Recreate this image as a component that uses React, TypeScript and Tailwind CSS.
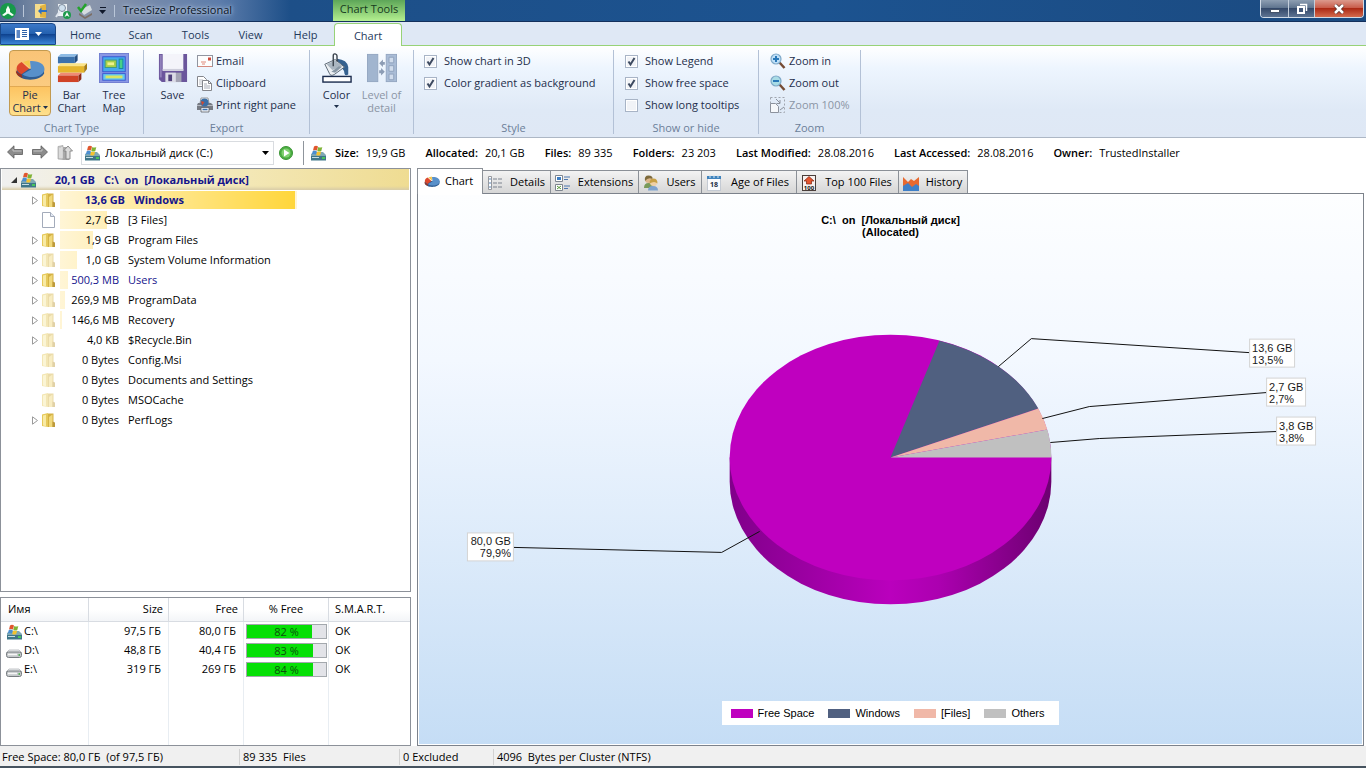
import { ReactNode } from "react";

interface IconProps {
  className?: string;
}

interface TreeItem {
  name: string;
  size: string;
  share: number;
  kind?: "folder" | "faded" | "file";
  expandable?: boolean;
  tone?: "bold" | "blue";
}

interface Drive {
  name: string;
  size: string;
  free: string;
  percent: number;
  system?: boolean;
}

const treeItems: TreeItem[] = [
  { name: "Windows", size: "13,6 GB", share: 67.6, expandable: true, tone: "bold" },
  { name: "[3 Files]", size: "2,7 GB", share: 13.5, kind: "file" },
  { name: "Program Files", size: "1,9 GB", share: 9.5, expandable: true },
  { name: "System Volume Information", size: "1,0 GB", share: 4.9, kind: "faded", expandable: true },
  { name: "Users", size: "500,3 MB", share: 2.4, expandable: true, tone: "blue" },
  { name: "ProgramData", size: "269,9 MB", share: 1.3, kind: "faded", expandable: true },
  { name: "Recovery", size: "146,6 MB", share: 0.7, kind: "faded", expandable: true },
  { name: "$Recycle.Bin", size: "4,0 KB", share: 0, kind: "faded", expandable: true },
  { name: "Config.Msi", size: "0 Bytes", share: 0, kind: "faded" },
  { name: "Documents and Settings", size: "0 Bytes", share: 0, kind: "faded" },
  { name: "MSOCache", size: "0 Bytes", share: 0, kind: "faded" },
  { name: "PerfLogs", size: "0 Bytes", share: 0, expandable: true },
];

const drives: Drive[] = [
  { name: "C:\\", size: "97,5 ГБ", free: "80,0 ГБ", percent: 82, system: true },
  { name: "D:\\", size: "48,8 ГБ", free: "40,4 ГБ", percent: 83 },
  { name: "E:\\", size: "319 ГБ", free: "269 ГБ", percent: 84 },
];

const facts = [
  ["Size:", "19,9 GB"],
  ["Allocated:", "20,1 GB"],
  ["Files:", "89 335"],
  ["Folders:", "23 203"],
  ["Last Modified:", "28.08.2016"],
  ["Last Accessed:", "28.08.2016"],
  ["Owner:", "TrustedInstaller"],
];

const legend = [
  { label: "Free Space", color: "bg-[#bf00bf]" },
  { label: "Windows", color: "bg-[#506080]" },
  { label: "[Files]", color: "bg-[#f0b8a8]" },
  { label: "Others", color: "bg-[#c0c0c0]" },
];

/* ---------- icons ---------- */

function SystemDriveIcon({ className = "h-4 w-4" }: IconProps) {
  return (
    <svg viewBox="0 0 16 16" className={className} aria-hidden="true">
      <path d="M1 9l3-2h9l3 3v5H1z" fill="#7fa8b4" />
      <path d="M1 11h15v4.500H1z" fill="#3f7688" />
      <path d="M2 12.500h7" stroke="#c5dde4" />
      <path d="M12 13h3" stroke="#4be04b" strokeWidth="1.500" />
      <path d="M4 1.500q2-1.500 4 0l-1 4q-2-1.200-4 0z" fill="#e0562d" />
      <path d="M8.300 2q2 1.200 4 0l-1 4q-2 1-4 0z" fill="#7fb436" />
      <path d="M2.800 6q2-1.200 4 0l-1 3.500q-2-1-4 0z" fill="#4a8ed0" />
      <path d="M7.200 6.500q2 1 4 0l-1 3.600q-2 1-4 0z" fill="#f4c22f" />
    </svg>
  );
}

function DriveIcon() {
  return (
    <svg viewBox="0 0 16 16" className="h-4 w-4" aria-hidden="true">
      <path d="M3 7h10l3 3H0z" fill="#eceeef" stroke="#a9aeb2" strokeWidth=".7" />
      <rect x=".5" y="9" width="15" height="5.500" rx="2" fill="#c4c8ca" stroke="#777c80" />
      <path d="M2 11.500h9" stroke="#f6f6f6" strokeWidth="1.500" />
      <path d="M12.500 12h1.500" stroke="#38a838" strokeWidth="1.500" />
    </svg>
  );
}

function FolderIcon({ faded }: { faded?: boolean }) {
  return (
    <svg viewBox="0 0 16 16" className={faded ? "h-4 w-4 opacity-45" : "h-4 w-4"} aria-hidden="true">
      <path d="M1 2.500L7 1v14l-6-1z" fill="#e6c95a" />
      <path d="M2 3.500l3-.8v11.500l-3-.6z" fill="#f8eaa4" />
      <path d="M7 1.500h5.500V15H7z" fill="#d4b143" />
      <path d="M8 5l3.500-2.500V15H8z" fill="#f0d97c" />
      <path d="M11.500 9.500l2.500 1V15h-2.500z" fill="#bd9a3c" />
    </svg>
  );
}

function FileIcon() {
  return (
    <svg viewBox="0 0 16 16" className="h-4 w-4" aria-hidden="true">
      <path d="M1.500.5h8l4 4v11h-12z" fill="#fff" stroke="#a3abba" />
      <path d="M9.500.5v4h4" fill="#e3e9f3" stroke="#a3abba" />
    </svg>
  );
}

function PieIcon({ className = "h-8 w-8" }: IconProps) {
  return (
    <svg viewBox="0 0 32 32" className={className} aria-hidden="true">
      <path d="M2 14v5c2 9 26 9 29 0v-5z" fill="#2f5c92" />
      <path d="M17 15L16 6c20-1 20 16 3 17-5 0-9-1-11-3z" fill="#5890ca" />
      <path d="M15 14L7 7C-1 11 1 18 7 20z" fill="#dc482c" />
      <path d="M7 20c-4-1-6-3-6-6v4c1 3 3 4 7 6z" fill="#99301e" />
      <path d="M16 13L8.500 7C11 6 13 5.500 15.500 5z" fill="#f3c54a" />
    </svg>
  );
}

function BarsIcon() {
  return (
    <svg viewBox="0 0 32 32" className="h-[30px] w-[30px]" aria-hidden="true">
      <path d="M1 4l3-3h18l-3 3z" fill="#8dbbe4" />
      <path d="M1 4h18v7H1z" fill="#3c72ac" />
      <path d="M19 4l3-3v7l-3 3z" fill="#264f80" />
      <path d="M1 14l3-3h28l-3 3z" fill="#fbe488" />
      <path d="M1 14h28v7H1z" fill="#e5b62c" />
      <path d="M29 14l3-3v6l-3 4z" fill="#a47c16" />
      <path d="M1 24l3-3h22l-3 3z" fill="#f08a74" />
      <path d="M1 24h22v7H1z" fill="#d04327" />
      <path d="M23 24l3-3v7l-3 3z" fill="#8f2a16" />
    </svg>
  );
}

function TreeMapIcon() {
  return (
    <svg viewBox="0 0 32 32" className="h-[30px] w-[30px]" aria-hidden="true">
      <rect x=".5" y=".5" width="31" height="31" fill="#8a97e4" stroke="#6f7cd0" />
      <rect x="4" y="4" width="24" height="16" fill="#45a9ec" stroke="#3a55d0" />
      <rect x="6.500" y="7.500" width="12" height="8" fill="#a8cf48" stroke="#3a9a80" />
      <rect x="9" y="10" width="7" height="3" fill="#eef28a" />
      <rect x="21.500" y="6.500" width="4" height="10" fill="#47d087" stroke="#1585a0" />
      <rect x="4" y="22" width="24" height="7" fill="#64c8ef" stroke="#3a55d0" />
      <rect x="7" y="24" width="18" height="3" fill="#d8e564" />
    </svg>
  );
}

function SaveIcon() {
  return (
    <svg viewBox="0 0 32 32" className="h-[30px] w-[30px]" aria-hidden="true">
      <path d="M1 1h30v30H4l-3-3z" fill="#6b569c" />
      <path d="M2 2h2v24H2z" fill="#9080ba" />
      <rect x="5" y="1" width="22" height="18" fill="#f4f4fa" />
      <path d="M5 17h22v2H5z" fill="#cfcfdc" />
      <rect x="8" y="21" width="17" height="10" fill="#a4a4b4" />
      <rect x="8" y="21" width="11" height="10" fill="#dcdce6" />
      <rect x="11" y="23" width="4" height="7" fill="#50427c" />
    </svg>
  );
}

function MailIcon() {
  return (
    <svg viewBox="0 0 16 16" className="h-4 w-4" aria-hidden="true">
      <rect x=".5" y="2.500" width="15" height="11" fill="#fdfdfd" stroke="#9095a0" />
      <path d="M11 4.500h3v3h-3z" fill="#cf4a3c" />
      <path d="M4 9h5M5 11h3" stroke="#e08878" />
      <path d="M1 13.500h14" stroke="#d58a7e" />
    </svg>
  );
}

function CopyIcon() {
  return (
    <svg viewBox="0 0 16 16" className="h-4 w-4" aria-hidden="true">
      <path d="M.5 1.500h6l3 3v7h-9z" fill="#fff" stroke="#84868c" />
      <path d="M2 5h4M2 7h4M2 9h3" stroke="#b9bcc4" />
      <path d="M5.500 5.500h6l3 3v7h-9z" fill="#fff" stroke="#84868c" />
      <path d="M11.500 5.500v3h3" fill="none" stroke="#84868c" />
      <path d="M7 9h3M7 11h6M7 13h6" stroke="#a7abb6" />
    </svg>
  );
}

function PrinterIcon() {
  return (
    <svg viewBox="0 0 16 16" className="h-4 w-4" aria-hidden="true">
      <path d="M4 1h7l1 5H3z" fill="#fff" stroke="#777" strokeWidth=".7" />
      <path d="M1 6h13l2 2v5H0V8z" fill="#767a83" />
      <path d="M0 8h16v1H0z" fill="#b4b8c0" />
      <circle cx="7.500" cy="5.500" r="4" fill="#3a6ea6" />
      <path d="M4 4l3.500 1L5 8.500z" fill="#d04a30" />
      <path d="M4 10.500h8V15H4z" fill="#f5f5f7" stroke="#5c6068" strokeWidth=".8" />
      <path d="M5.500 12.500h5" stroke="#3a72b0" strokeWidth="1.500" />
    </svg>
  );
}

function BucketIcon() {
  return (
    <svg viewBox="0 0 32 32" className="h-[30px] w-8" aria-hidden="true">
      <path d="M16 6q11 1 12 9v8q-3 2-4-1 0-6-8-7z" fill="#35618f" />
      <path d="M3 12L14 7l10 8-11 8q-4 2-5-1z" fill="#eceff2" stroke="#596572" />
      <path d="M5 12l9-4 8 6-11 4z" fill="#aab6c1" />
      <path d="M12 14V3q0-2.500 2-2t2 2v6" fill="none" stroke="#3c444e" strokeWidth="1.500" />
      <path d="M10 20l8-6 3 1-7 6z" fill="#8797a5" />
      <rect x="1" y="25" width="30" height="6" fill="#fff" stroke="#1b2c4d" strokeWidth="1.500" />
    </svg>
  );
}

function DetailLevelIcon() {
  return (
    <svg viewBox="0 0 32 32" className="h-[30px] w-8" aria-hidden="true">
      <rect x=".5" y="1.500" width="11" height="29" fill="#a1b5cf" stroke="#93a6c1" />
      <rect x="20.500" y="1.500" width="11" height="29" fill="#a9bcd6" stroke="#93a6c1" />
      <path d="M23.500 4.500h5v6h-5zM23.500 13.500h5v6h-5zM23.500 22.500h5v6h-5z" fill="#d0dcec" stroke="#8fa2bd" />
      <path d="M13 11l4-4v2.500h2v3h-2V15z" fill="#8d9db5" />
      <path d="M19 20l-4-4v2.500h-2v3h2V24z" fill="#8d9db5" />
    </svg>
  );
}

function MagnifierIcon({ plus }: { plus?: boolean }) {
  return (
    <svg viewBox="0 0 16 16" className="h-4 w-4" aria-hidden="true">
      <path d="M9.500 9.500l5 5.500" stroke="#754b34" strokeWidth="2.500" />
      <circle cx="6" cy="6" r="5" fill={plus ? "#bfe0f8" : "#a9dce6"} stroke="#7fa9c8" strokeWidth="1.200" />
      <path d={plus ? "M3 6h6M6 3v6" : "M3 6h6"} stroke="#2a78b8" strokeWidth="2" />
    </svg>
  );
}

function ZoomFullIcon() {
  return (
    <svg viewBox="0 0 16 16" className="h-4 w-4" aria-hidden="true">
      <path d="M.5.5h14v15H.5z" fill="none" stroke="#a0a5ae" strokeDasharray="2 2" />
      <path d="M.5 6.500h5l3 3v6h-8z" fill="#f6f8fb" stroke="#8c929d" />
      <path d="M6 2l4 4M10 3v3.500H6.500M10 13l4-3" fill="none" stroke="#8c929d" />
    </svg>
  );
}

function ArrowIcon({ right }: { right?: boolean }) {
  return (
    <svg viewBox="0 0 16 16" className="h-4 w-4" aria-hidden="true">
      <path
        d={right ? "M15.500 7L9 .8v3.700H.5v5H9v3.700z" : "M.5 7L7 .8v3.700h8.500v5H7v3.700z"}
        fill="#8c8c8c"
        stroke="#5c5c5c"
        strokeWidth=".8"
      />
      <path d={right ? "M1.500 6H10V4" : "M14.500 6H6V4"} fill="none" stroke="#c4c4c4" />
    </svg>
  );
}

function FolderUpIcon() {
  return (
    <svg viewBox="0 0 16 16" className="h-4 w-4" aria-hidden="true">
      <path d="M1 1.500L6 .5v14l-5-.5z" fill="#c9c9c9" stroke="#999" strokeWidth=".6" />
      <path d="M6 2h6v13H6z" fill="#a8a8a8" />
      <path d="M3 3v10M5 2v11" stroke="#ececec" />
      <path d="M11 1l4.500 5H13v8H9V6H6.500z" fill="#dcdcdc" stroke="#858585" strokeWidth=".9" />
    </svg>
  );
}

function DetailsTabIcon() {
  return (
    <svg viewBox="0 0 16 16" className="h-4 w-4" aria-hidden="true">
      <path d="M1.500 1.500h3v13h-3z" fill="#fff" stroke="#96999f" />
      <path d="M2 4h2M2 8h2M2 12h2" stroke="#5d85b5" />
      <path d="M6 4h4M11 4h4M6 8h4M11 8h4M6 12h4M11 12h4" stroke="#7c838f" />
    </svg>
  );
}

function ExtensionsTabIcon() {
  return (
    <svg viewBox="0 0 16 16" className="h-4 w-4" aria-hidden="true">
      <path d="M.5.5h7v6h-7zM.5 9.500h7v6h-7z" fill="#fff" stroke="#7e858f" />
      <path d="M2 2h4v3H2z" fill="#3b7dc4" />
      <path d="M2 11l4 3M6 11l-4 3" stroke="#569838" />
      <path d="M9 2h6M9 4.500h4M9 11h6M9 13.500h4" stroke="#4d77ae" />
    </svg>
  );
}

function UsersTabIcon() {
  return (
    <svg viewBox="0 0 16 16" className="h-4 w-4" aria-hidden="true">
      <path d="M1 13q0-5 4.500-5t4.500 5z" fill="#7a9a5a" />
      <circle cx="5.500" cy="4.500" r="3.500" fill="#dcb68c" />
      <path d="M2 6Q1 .5 5.500.5T9.500 4Q5 2 2 6z" fill="#7d6a3c" />
      <path d="M5 15.500q0-4.500 5-4.500t5 4.500z" fill="#7ea3cf" />
      <circle cx="10.500" cy="7.500" r="3.500" fill="#efd0a6" />
      <path d="M6.500 8.500Q6.500 3.500 10.500 3.500T14.500 8.500q-3-3-8 0z" fill="#c7a045" />
    </svg>
  );
}

function CalendarTabIcon() {
  return (
    <svg viewBox="0 0 16 16" className="h-4 w-4" aria-hidden="true">
      <rect x="1.500" y="2.500" width="13" height="13" fill="#fbfbfd" stroke="#c4cad3" />
      <rect x="1" y="1" width="14" height="3" fill="#3f83bd" />
      <path d="M4 0v3M8 0v3M12 0v3" stroke="#d7e6f3" />
      <text x="8" y="12" textAnchor="middle" fontSize="7" fontWeight="700" fill="#1b2b45">18</text>
    </svg>
  );
}

function TopTabIcon() {
  return (
    <svg viewBox="0 0 16 16" className="h-4 w-4" aria-hidden="true">
      <rect x="1.500" y=".5" width="13" height="15" fill="#f7f1ef" stroke="#4a3e3a" />
      <path d="M8 1.500l5 4.500h-2.500v3h-5V6H3z" fill="#e4552e" stroke="#7f2411" strokeWidth=".7" />
      <text x="8" y="15" textAnchor="middle" fontSize="6" fontWeight="700" fill="#111">100</text>
    </svg>
  );
}

function HistoryTabIcon() {
  return (
    <svg viewBox="0 0 16 16" className="h-4 w-4" aria-hidden="true">
      <path d="M0 2l5 5 3-3 3 2 5-4v14H0z" fill="#e8692f" />
      <path d="M0 11l5-3 4 4 4-3 3 2v5H0z" fill="#3f80c8" />
    </svg>
  );
}

function Caret({ className }: IconProps) {
  return (
    <svg viewBox="0 0 7 4" className={className} aria-hidden="true">
      <path d="M0 0h7L3.500 4z" fill="currentColor" />
    </svg>
  );
}

/* ---------- title bar and ribbon ---------- */

function TitleBar() {
  return (
    <header className="flex h-[22px] border-b border-[#14305c] bg-[linear-gradient(to_right,#4f6a92_0,#8f9bac_60px,#8794ab_100px,#5c7cab_220px,#1d4f88_290px,#1c5390_60%,#1b4a80)]">
      <div className="flex w-[333px] shrink-0 items-center">
        <svg viewBox="0 0 16 16" className="h-4 w-4" aria-hidden="true">
          <circle cx="8" cy="8" r="8" fill="#16994a" />
          <path d="M8 2.500l2 4v2.500l4 3-2 1-4-2.500L4 13l-2-1 4-3V6.500z" fill="#f2fff5" />
        </svg>
        <span className="mx-[7px] h-3 w-px bg-[#b9c6d8]" />
        <button type="button" aria-label="Exit" className="ml-0.5">
          <svg viewBox="0 0 16 16" className="h-4 w-4">
            <path d="M2 1h10v14H2z" fill="#f6dd8c" />
            <path d="M7 3l6-2v14l-6-1z" fill="#e2b33e" />
            <path d="M14 7H8.500V4.500L5 8l3.500 3.500V9H14z" fill="#2d6fc0" />
          </svg>
        </button>
        <button type="button" aria-label="Search" className="ml-1.5">
          <svg viewBox="0 0 16 16" className="h-4 w-4">
            <path d="M3 1h9v12H3z" fill="#edf2f6" />
            <circle cx="7" cy="5" r="3.500" fill="#cfe0ee" stroke="#7d8b9c" />
            <path d="M5 8l-4 6" stroke="#dfe6ee" strokeWidth="2" />
            <circle cx="12" cy="12" r="4" fill="#1d9a4c" />
            <path d="M12 9l2.500 5-2.500-1.500L9.500 14z" fill="#fff" />
          </svg>
        </button>
        <button type="button" aria-label="Options" className="ml-1.5">
          <svg viewBox="0 0 16 16" className="h-4 w-4">
            <path d="M3 7l10-5 2 5-8 5z" fill="#d5dce0" />
            <path d="M2 10l6 4 7-4v2l-7 4-6-4z" fill="#7c6f66" />
            <path d="M1 4l3 4 5-7" fill="none" stroke="#24a42c" strokeWidth="2.500" />
          </svg>
        </button>
        <button type="button" aria-label="Customize toolbar" className="ml-1.5 flex flex-col items-center gap-0.5 text-[#10182a]">
          <span className="h-px w-1.5 bg-[#10182a]" />
          <Caret className="h-1 w-[7px]" />
        </button>
        <span className="mr-2 ml-2 h-3 w-px bg-[#b9c6d8]" />
        <h1 className="text-[11px] text-[#0a1424] [text-shadow:0_0_6px_#c3d4ea,0_0_3px_#c3d4ea]">TreeSize Professional</h1>
      </div>
      <div className="w-[72px] shrink-0 bg-linear-to-b from-[#5da658] to-[#b4f090] text-center text-[11px] leading-[18px] text-[#16391d]">
        Chart Tools
      </div>
      <div className="mr-0.5 ml-auto flex h-[18px] overflow-hidden rounded-b border border-t-0 border-[#d0dae6]">
        <button type="button" aria-label="Minimize" className="flex w-7 items-center justify-center border-r border-[#c3cedb] bg-[linear-gradient(#8d9eb2,#60758f_45%,#34496a_50%,#5d7392)]">
          <span className="mt-1 h-1 w-2.5 border border-[#44536a] bg-white" />
        </button>
        <button type="button" aria-label="Restore" className="flex w-[26px] items-center justify-center border-r border-[#c3cedb] bg-[linear-gradient(#8d9eb2,#60758f_45%,#34496a_50%,#5d7392)]">
          <svg viewBox="0 0 12 12" className="h-3 w-3">
            <path d="M4 1.500h6.500V8" fill="none" stroke="#fff" strokeWidth="1.500" />
            <rect x="2" y="4" width="6" height="6" fill="#44597a" stroke="#fff" strokeWidth="2" />
          </svg>
        </button>
        <button type="button" aria-label="Close" className="flex w-12 items-center justify-center bg-[linear-gradient(#dc9a8d,#c95d4b_45%,#ac2a15_50%,#d46a4d)]">
          <svg viewBox="0 0 12 10" className="h-2.5 w-3">
            <path d="M2 1l8 8M10 1L2 9" stroke="#5a302c" strokeWidth="4" />
            <path d="M2 1l8 8M10 1L2 9" stroke="#fff" strokeWidth="2.500" />
          </svg>
        </button>
      </div>
    </header>
  );
}

function RibbonTabs() {
  return (
    <nav className="flex h-6 items-end border-b border-[#97d277] bg-[#dfe8f5] text-[11px] text-[#1e395b]">
      <button type="button" aria-label="Application menu" className="flex h-[22px] w-14 items-center justify-center gap-1.5 rounded-tr border border-[#1a4888] bg-[linear-gradient(#3c78c8,#2461b0_48%,#0f4390_52%,#3c86d8)] text-white">
        <svg viewBox="0 0 14 12" className="h-3 w-3.5" aria-hidden="true">
          <rect width="14" height="12" fill="#fff" />
          <path d="M1.500 2h3.500v8H1.500z" fill="#5b86c4" />
          <path d="M7 2.500h5M7 4.500h5M7 6.500h5M7 8.500h5" stroke="#2f62a8" />
        </svg>
        <Caret className="h-1 w-[7px]" />
      </button>
      <div className="flex h-[22px] pl-0.5 [&>button]:pt-0.5">
        <button type="button" className="w-[55px]">Home</button>
        <button type="button" className="w-[55px]">Scan</button>
        <button type="button" className="w-[55px]">Tools</button>
        <button type="button" className="w-[55px]">View</button>
        <button type="button" className="w-[55px]">Help</button>
        <button type="button" className="ml-px -mb-px h-[23px] w-[68px] rounded-t border border-b-0 border-[#97d277] bg-white">Chart</button>
      </div>
    </nav>
  );
}

function RibbonGroup({ title, width, children }: { title?: string; width: string; children: ReactNode }) {
  return (
    <section className={`${width} flex shrink-0 flex-col border-r border-[#b3c1d6]`}>
      <div className="flex h-[72px] shrink-0">{children}</div>
      {title && <h2 className="text-center text-[11px] leading-3 text-[#6c7f99]">{title}</h2>}
    </section>
  );
}

function BigButton({ icon, children, width, disabled }: { icon: ReactNode; children: ReactNode; width: string; disabled?: boolean }) {
  return (
    <button type="button" disabled={disabled} className={`${width} flex flex-col items-center pt-[3px] leading-[13px] disabled:text-[#8b95a5]`}>
      {icon}
      <span className="mt-[5px]">{children}</span>
    </button>
  );
}

function SmallButton({ icon, children, disabled }: { icon: ReactNode; children: ReactNode; disabled?: boolean }) {
  return (
    <button type="button" disabled={disabled} className="flex h-[22px] items-center gap-[3px] whitespace-nowrap disabled:text-[#8b95a5]">
      {icon}
      {children}
    </button>
  );
}

function Check({ children, checked }: { children: ReactNode; checked?: boolean }) {
  return (
    <label className="flex h-[22px] items-center gap-[7px] whitespace-nowrap">
      <span className="grid">
        <input
          type="checkbox"
          defaultChecked={checked}
          className="peer col-start-1 row-start-1 h-[13px] w-[13px] appearance-none border border-[#a8b4c6] bg-[#f1f3f7] shadow-[inset_0_0_0_1px_#fff]"
        />
        <svg viewBox="0 0 13 13" className="pointer-events-none col-start-1 row-start-1 hidden h-[13px] w-[13px] peer-checked:block" aria-hidden="true">
          <path d="M3.500 6.500l2 3L9.500 3" fill="none" stroke="#3d4a60" strokeWidth="2" />
        </svg>
      </span>
      {children}
    </label>
  );
}

function Ribbon() {
  return (
    <div className="flex h-[92px] border-b border-[#adb7c5] bg-[linear-gradient(#ffffff,#edf5fe_25%,#dfe9f6_70%,#dfe8f5)] pt-1 pb-[3px] text-[11px] text-[#1e2f4b]">
      <RibbonGroup title="Chart Type" width="w-36">
        <div className="flex pl-[9px]">
          <button type="button" className="flex h-[66px] w-[42px] flex-col items-center rounded-sm border border-[#c29a50] bg-[linear-gradient(#f9c477,#fbcb80_54%,#d9a04c_55%,#fdc462_57%,#fee08c)] leading-[13px]">
            <PieIcon className="mt-0.5 h-[35px] w-[30px]" />
            <span>Pie</span>
            <span className="flex items-center gap-0.5">Chart<Caret className="h-[3px] w-[5px]" /></span>
          </button>
          <BigButton width="w-[41px]" icon={<BarsIcon />}>Bar<br />Chart</BigButton>
          <BigButton width="w-11" icon={<TreeMapIcon />}>Tree<br />Map</BigButton>
        </div>
      </RibbonGroup>
      <RibbonGroup title="Export" width="w-[166px]">
        <BigButton width="w-[53px] pl-1" icon={<SaveIcon />}>Save</BigButton>
        <div>
          <SmallButton icon={<MailIcon />}>Email</SmallButton>
          <SmallButton icon={<CopyIcon />}>Clipboard</SmallButton>
          <SmallButton icon={<PrinterIcon />}>Print right pane</SmallButton>
        </div>
      </RibbonGroup>
      <RibbonGroup width="w-[104px]">
        <div className="flex pl-1">
          <BigButton width="w-[45px]" icon={<BucketIcon />}>Color<Caret className="mx-auto mt-1 h-[3px] w-[5px]" /></BigButton>
          <BigButton width="w-[45px]" icon={<DetailLevelIcon />} disabled>Level of detail</BigButton>
        </div>
      </RibbonGroup>
      <RibbonGroup title="Style" width="w-[200px]">
        <div className="pl-2.5">
          <Check checked>Show chart in 3D</Check>
          <Check checked>Color gradient as background</Check>
        </div>
      </RibbonGroup>
      <RibbonGroup title="Show or hide" width="w-[145px]">
        <div className="pl-[11px]">
          <Check checked>Show Legend</Check>
          <Check checked>Show free space</Check>
          <Check>Show long tooltips</Check>
        </div>
      </RibbonGroup>
      <RibbonGroup title="Zoom" width="w-[102px]">
        <div className="pl-[11px]">
          <SmallButton icon={<MagnifierIcon plus />}>Zoom in</SmallButton>
          <SmallButton icon={<MagnifierIcon />}>Zoom out</SmallButton>
          <SmallButton icon={<ZoomFullIcon />} disabled>Zoom 100%</SmallButton>
        </div>
      </RibbonGroup>
    </div>
  );
}

function AddressBar() {
  return (
    <div className="flex h-[30px] items-center bg-white text-[11px]">
      <div className="flex w-[81px] shrink-0 items-center gap-[9px] pl-[7px]">
        <button type="button" aria-label="Back"><ArrowIcon /></button>
        <button type="button" aria-label="Forward"><ArrowIcon right /></button>
        <button type="button" aria-label="Up"><FolderUpIcon /></button>
      </div>
      <label className="relative flex h-6 w-[193px] shrink-0 items-center border border-[#d9dce0] pl-0.5">
        <SystemDriveIcon />
        <select aria-label="Drive" className="h-full flex-1 appearance-none bg-transparent pl-[5px] text-[11px]">
          <option>Локальный диск (C:)</option>
        </select>
        <Caret className="pointer-events-none absolute right-1 h-1 w-[7px]" />
      </label>
      <button type="button" aria-label="Scan" className="ml-[5px]">
        <svg viewBox="0 0 14 14" className="h-3.5 w-3.5">
          <circle cx="7" cy="7" r="6.500" fill="#4cae42" stroke="#3b9434" />
          <circle cx="7" cy="7" r="4.500" fill="#7fd070" />
          <path d="M5 3.500v7L10.500 7z" fill="#fff" />
        </svg>
      </button>
      <span className="mx-2.5 h-6 w-px bg-[#8f959c]" />
      <SystemDriveIcon className="-ml-1 h-4 w-4" />
      <dl className="ml-[9px] flex gap-5 whitespace-nowrap">
        {facts.map(([label, value]) => (
          <div key={label} className="flex gap-[7px]">
            <dt className="font-semibold">{label}</dt>
            <dd>{value}</dd>
          </div>
        ))}
      </dl>
    </div>
  );
}

/* ---------- left pane ---------- */

function TreeRow({ item }: { item: TreeItem }) {
  const bold = item.tone === "bold";
  const color = item.tone ? "text-[#14148c]" : "text-black";
  return (
    <li className="flex h-5 items-center pl-7">
      <span className="flex w-3 justify-center">
        {item.expandable && (
          <svg viewBox="0 0 6 9" className="h-[9px] w-1.5" aria-hidden="true">
            <path d="M.5.8l5 3.700-5 3.700z" fill="#fff" stroke="#9a9a9a" />
          </svg>
        )}
      </span>
      <span className="w-[19px] shrink-0">
        {item.kind === "file" ? <FileIcon /> : <FolderIcon faded={item.kind === "faded"} />}
      </span>
      <div className={`relative flex h-5 flex-1 items-center ${color} ${bold ? "font-bold" : ""}`}>
        <div
          className="absolute inset-y-px left-0 bg-[linear-gradient(to_right,#fff5d6,#ffd63a)] bg-[length:235px_100%]"
          style={{ width: `${item.share}%` }}
        />
        <span className={`relative text-right whitespace-nowrap ${bold ? "w-[65px]" : "w-[59px]"}`}>{item.size}</span>
        <span className="relative pl-[9px] whitespace-nowrap">{item.name}</span>
      </div>
    </li>
  );
}

function FolderTree() {
  return (
    <ul className="flex-1 border border-[#8c9199] bg-white text-[11px]">
      <li className="mx-px flex h-[21px] items-center bg-[linear-gradient(to_right,#f0f0f0_0%,#f5edc8_40%,#efdc92)] pt-px pl-2 font-bold whitespace-nowrap text-[#14148c] shadow-[inset_0_-4px_3px_-2px_#d8cda8]">
        <svg viewBox="0 0 8 8" className="h-2 w-2" aria-hidden="true">
          <path d="M7 1v6H1z" fill="#333" />
        </svg>
        <SystemDriveIcon className="ml-0.5 h-4 w-4" />
        <span className="w-[59px] text-right">20,1 GB</span>
        <span className="pl-[9px] whitespace-pre">{"C:\\  on  [Локальный диск]"}</span>
      </li>
      {treeItems.map((item) => (
        <TreeRow key={item.name} item={item} />
      ))}
    </ul>
  );
}

function DriveTable() {
  const line = "border-r border-[#e8edf2]";
  return (
    <div className="h-[149px] border border-[#8c9199] bg-white">
      <table className="h-full w-full table-fixed border-separate border-spacing-0 text-[11px]">
        <colgroup>
          <col className="w-[88px]" />
          <col className="w-20" />
          <col className="w-[75px]" />
          <col className="w-[85px]" />
          <col />
        </colgroup>
        <thead className="bg-linear-to-b from-white from-50% to-[#f2f4f7]">
          <tr className="h-6 [&>th]:border-b [&>th]:border-[#d8dce2] [&>th]:font-normal">
            <th className={`${line} pl-[7px] text-left`}>Имя</th>
            <th className={`${line} pr-[5px] text-right`}>Size</th>
            <th className={`${line} pr-[5px] text-right`}>Free</th>
            <th className={line}>% Free</th>
            <th className="pl-1.5 text-left">S.M.A.R.T.</th>
          </tr>
        </thead>
        <tbody>
          {drives.map((drive) => (
            <tr key={drive.name} className="h-[19px]">
              <td className={`${line} pl-[5px]`}>
                <span className="flex items-center gap-0.5">
                  {drive.system ? <SystemDriveIcon /> : <DriveIcon />}
                  {drive.name}
                </span>
              </td>
              <td className={`${line} pr-[7px] text-right`}>{drive.size}</td>
              <td className={`${line} pr-[7px] text-right`}>{drive.free}</td>
              <td className={`${line} pr-px pl-0.5`}>
                <div className="relative h-[15px] border border-[#a3a8ad] bg-[#e2e3e8] text-center leading-[13px]">
                  <div className="absolute inset-y-0 left-0 bg-[#06e006]" style={{ width: `${drive.percent}%` }} />
                  <span className="relative text-[#0b500b]">{drive.percent} %</span>
                </div>
              </td>
              <td className="pl-1.5">OK</td>
            </tr>
          ))}
          <tr aria-hidden="true">
            <td className={line} />
            <td className={line} />
            <td className={line} />
            <td className={line} />
            <td />
          </tr>
        </tbody>
      </table>
    </div>
  );
}

/* ---------- right pane ---------- */

function PaneTab({ icon, width, children }: { icon: ReactNode; width: string; children: ReactNode }) {
  return (
    <button
      type="button"
      role="tab"
      className={`${width} flex h-[23px] items-center gap-0.5 border border-b-0 border-l-0 border-[#8b9097] bg-linear-to-b from-[#f3f3f3] to-[#d6d6d6] pt-px pl-1 whitespace-nowrap`}
    >
      {icon}
      <span className="flex-1 text-center">{children}</span>
    </button>
  );
}

function PaneTabs() {
  return (
    <div role="tablist" className="flex h-[25px] items-end text-[11px]">
      <button type="button" role="tab" aria-selected="true" className="relative -mb-px flex h-[26px] w-[66px] items-center gap-[5px] border border-b-0 border-[#8b9097] bg-white pl-1.5">
        <PieIcon className="h-4 w-4" />
        Chart
      </button>
      <PaneTab width="w-[68px]" icon={<DetailsTabIcon />}>Details</PaneTab>
      <PaneTab width="w-[88px]" icon={<ExtensionsTabIcon />}>Extensions</PaneTab>
      <PaneTab width="w-[63px]" icon={<UsersTabIcon />}>Users</PaneTab>
      <PaneTab width="w-[95px]" icon={<CalendarTabIcon />}>Age of Files</PaneTab>
      <PaneTab width="w-[102px]" icon={<TopTabIcon />}>Top 100 Files</PaneTab>
      <PaneTab width="w-[69px]" icon={<HistoryTabIcon />}>History</PaneTab>
    </div>
  );
}

function Callout({ x, y, w, lines, end }: { x: number; y: number; w: number; lines: string[]; end?: boolean }) {
  const tx = end ? x + w - 2 : x + 3;
  return (
    <g>
      <rect x={x + 0.5} y={y + 0.5} width={w} height="28" fill="#fff" stroke="#d4d4d4" />
      <text fontSize="11" fill="#1a1a1a" textAnchor={end ? "end" : "start"}>
        <tspan x={tx} y={y + 13}>{lines[0]}</tspan>
        <tspan x={tx} y={y + 25}>{lines[1]}</tspan>
      </text>
    </g>
  );
}

function SpacePie() {
  return (
    <svg viewBox="0 0 944 460" className="min-h-0 w-full flex-1" role="img" aria-label="Disk usage by folder">
      <defs>
        <linearGradient id="rim">
          <stop offset="0" stopColor="#80008a" />
          <stop offset=".5" stopColor="#ba00bd" />
          <stop offset=".65" stopColor="#ac00b0" />
          <stop offset="1" stopColor="#6c0070" />
        </linearGradient>
      </defs>
      <path d="M311 218v24a161 123 0 0 0 322 0v-24z" fill="url(#rim)" />
      <ellipse cx="472" cy="218" rx="161" ry="123" fill="#bf00bf" />
      <path d="M472 218L521 101A161 123 0 0 1 620 169z" fill="#506080" />
      <path d="M472 218L620 169A161 123 0 0 1 629 190z" fill="#f0b8a8" />
      <path d="M472 218L629 190A161 123 0 0 1 633 218z" fill="#c0c0c0" />
      <g fill="none" stroke="#111">
        <path d="M580 127l33-28 218 14" />
        <path d="M624 179l47-12 177-14" />
        <path d="M632 203l49-4 177-7" />
        <path d="M95 308l208 5 38-21" />
      </g>
      <Callout x={831} y={99} w={45} lines={["13,6 GB", "13,5%"]} />
      <Callout x={848} y={138} w={39} lines={["2,7 GB", "2,7%"]} />
      <Callout x={858} y={177} w={39} lines={["3,8 GB", "3,8%"]} />
      <Callout x={48} y={293} w={46} lines={["80,0 GB", "79,9%"]} end />
    </svg>
  );
}

function ChartPane() {
  return (
    <div className="flex flex-1 flex-col border border-[#7c828b] bg-white p-px">
      <div className="flex flex-1 flex-col bg-[linear-gradient(#fdfeff,#f3f8ff_30%,#c5ddf5)] pt-[19px] pb-[19px] font-['Liberation_Sans',Arial,sans-serif] text-[11px]">
        <h2 className="text-center leading-3 font-bold whitespace-pre">{"C:\\  on  [Локальный диск]\n(Allocated)"}</h2>
        <SpacePie />
        <ul className="mx-auto flex h-6 items-center gap-3.5 bg-white pr-[15px] pl-[9px]">
          {legend.map((entry) => (
            <li key={entry.label} className="flex items-center gap-[5px]">
              <span className={`${entry.color} h-[9px] w-[22px]`} />
              {entry.label}
            </li>
          ))}
        </ul>
      </div>
    </div>
  );
}

function StatusBar() {
  return (
    <footer className="flex h-[22px] items-center border-b-2 border-[#46535f] bg-[#f0f0f0] pt-0.5 text-[11px] whitespace-pre [&>span]:border-r [&>span]:border-[#d2d2d2]">
      <span className="w-60 pl-0.5">{"Free Space: 80,0 ГБ  (of 97,5 ГБ)"}</span>
      <span className="w-40 pl-[3px]">{"89 335  Files"}</span>
      <span className="w-[94px] pl-[3px]">0 Excluded</span>
      <p className="pl-[3px]">{"4096  Bytes per Cluster (NTFS)"}</p>
    </footer>
  );
}

export default function App() {
  return (
    <div className="flex min-h-screen flex-col bg-[#f0f0f0] font-['Open_Sans','Noto_Sans',sans-serif] text-black">
      <TitleBar />
      <RibbonTabs />
      <Ribbon />
      <AddressBar />
      <main className="flex flex-1 gap-1.5 bg-white pr-0.5">
        <div className="flex w-[411px] shrink-0 flex-col gap-[5px]">
          <FolderTree />
          <DriveTable />
        </div>
        <div className="flex flex-1 flex-col">
          <PaneTabs />
          <ChartPane />
        </div>
      </main>
      <StatusBar />
    </div>
  );
}
